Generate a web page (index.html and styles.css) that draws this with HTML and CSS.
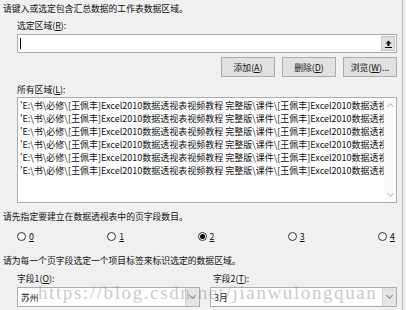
FILE: index.html
```html
<!DOCTYPE html>
<html lang="zh-CN">
<head>
  <meta charset="UTF-8">
  <meta name="viewport" content="width=device-width, initial-scale=1.0">
  <title>数据透视表和数据透视图向导</title>
  <link rel="stylesheet" href="styles.css">
</head>
<body>
  <div class="dialog">
    <p class="prompt">请键入或选定包含汇总数据的工作表数据区域。</p>

    <div class="group">
      <div class="field-label">选定区域(<u>R</u>):</div>
      <div class="ref-input">
        <span class="caret"></span>
        <button class="collapse" title="折叠对话框">
          <svg width="7" height="8" viewBox="0 0 7 8">
            <path d="M3.5 0.5 L6.5 3.5 H4.5 V6 H2.5 V3.5 H0.5 Z" fill="#000"/>
            <rect x="0" y="7" width="7" height="1" fill="#000"/>
          </svg>
        </button>
      </div>

      <div class="actions">
        <button class="btn">添加(<u>A</u>)</button>
        <button class="btn">删除(<u>D</u>)</button>
        <button class="btn">浏览(<u>W</u>)...</button>
      </div>

      <div class="field-label list-label">所有区域(<u>L</u>):</div>
      <div class="listbox">
        <ul class="ranges">
          <li>'E:\书\必修\[王佩丰]Excel2010数据透视表视频教程 完整版\课件\[王佩丰]Excel2010数据透视表视频教程</li>
          <li>'E:\书\必修\[王佩丰]Excel2010数据透视表视频教程 完整版\课件\[王佩丰]Excel2010数据透视表视频教程</li>
          <li>'E:\书\必修\[王佩丰]Excel2010数据透视表视频教程 完整版\课件\[王佩丰]Excel2010数据透视表视频教程</li>
          <li>'E:\书\必修\[王佩丰]Excel2010数据透视表视频教程 完整版\课件\[王佩丰]Excel2010数据透视表视频教程</li>
          <li>'E:\书\必修\[王佩丰]Excel2010数据透视表视频教程 完整版\课件\[王佩丰]Excel2010数据透视表视频教程</li>
          <li>'E:\书\必修\[王佩丰]Excel2010数据透视表视频教程 完整版\课件\[王佩丰]Excel2010数据透视表视频教程</li>
        </ul>
        <div class="scrollbar">
          <span class="arrow up"></span>
          <span class="arrow down"></span>
        </div>
      </div>
    </div>

    <p class="prompt">请先指定要建立在数据透视表中的页字段数目。</p>
    <div class="radios">
      <label class="radio"><span class="dot"></span><u>0</u></label>
      <label class="radio"><span class="dot"></span><u>1</u></label>
      <label class="radio"><span class="dot checked"></span><u>2</u></label>
      <label class="radio"><span class="dot"></span><u>3</u></label>
      <label class="radio"><span class="dot"></span><u>4</u></label>
    </div>

    <p class="prompt">请为每一个页字段选定一个项目标签来标识选定的数据区域。</p>
    <div class="fields">
      <div class="field">
        <div class="field-label">字段1(<u>O</u>):</div>
        <div class="combo">
          <span class="combo-value">苏州</span>
          <span class="combo-btn"></span>
        </div>
      </div>
      <div class="field second">
        <div class="field-label">字段2(<u>T</u>):</div>
        <div class="combo">
          <span class="combo-value">3月</span>
          <span class="combo-btn"></span>
        </div>
      </div>
    </div>

    <div class="watermark">https://blog.csdn.net/jianwulongquan</div>
  </div>
</body>
</html>
```

FILE: styles.css
```css
* {
  margin: 0;
  padding: 0;
  box-sizing: border-box;
}

body {
  font-family: "Noto Sans CJK SC", "Noto Sans", sans-serif;
  font-size: 8.8px;
  line-height: 13px;
  color: #111;
  background-color: #f0f0f0;
  width: 406px;
  height: 310px;
  overflow: hidden;
}

.dialog {
  position: relative;
  width: 403px;
  height: 310px;
  padding: 2px 0 0 3px;
  border-right: 1px solid #b9b9b9;
}

u {
  text-decoration: underline;
  text-underline-offset: 1px;
}

.prompt {
  height: 13px;
  white-space: nowrap;
}

.group {
  padding-left: 14px;
  width: 394px;
}

.field-label {
  height: 13px;
  margin-top: 4px;
}

.ref-input {
  display: flex;
  align-items: center;
  justify-content: space-between;
  height: 19px;
  margin-top: 2px;
  padding: 0 1px 0 2px;
  background: #fff;
  border: 1px solid #abadb3;
}

.caret {
  width: 1px;
  height: 11px;
  background: #000;
}

.collapse {
  display: flex;
  align-items: center;
  justify-content: center;
  width: 14px;
  height: 15px;
  background: #e1e1e1;
  border: 1px solid #c4c4c4;
}

.actions {
  display: flex;
  justify-content: flex-end;
  gap: 7px;
  margin-top: 4px;
}

.btn {
  width: 54px;
  height: 20px;
  font-family: inherit;
  font-size: 8.8px;
  color: #111;
  background: #e1e1e1;
  border: 1px solid #adadad;
}

.list-label {
  margin-top: 6px;
}

.listbox {
  display: flex;
  height: 106px;
  margin-top: 1px;
  background: #fff;
  border: 1px solid #abadb3;
}

.ranges {
  flex: 1;
  list-style: none;
  overflow: hidden;
  padding: 1px 0 0 2px;
}

.ranges li {
  height: 13px;
  font-size: 9px;
  white-space: nowrap;
  overflow: hidden;
}

.scrollbar {
  display: flex;
  flex-direction: column;
  justify-content: space-between;
  align-items: center;
  width: 12px;
  padding: 4px 0;
  background: #fafafa;
}

.arrow {
  width: 5px;
  height: 5px;
  border-left: 1px solid #c2c2c2;
  border-top: 1px solid #c2c2c2;
}

.arrow.up {
  transform: translateY(2px) rotate(45deg);
}

.arrow.down {
  transform: translateY(-2px) rotate(225deg);
}

.group + .prompt {
  margin-top: 7px;
}

.radios {
  display: flex;
  justify-content: space-between;
  width: 394px;
  height: 13px;
  margin-top: 7px;
  padding-left: 14px;
}

.radio {
  display: flex;
  align-items: center;
  gap: 3px;
  width: 19px;
}

.dot {
  display: flex;
  align-items: center;
  justify-content: center;
  width: 9px;
  height: 9px;
  border: 1px solid #333;
  border-radius: 50%;
  background: #fff;
}

.dot.checked::after {
  content: "";
  width: 5px;
  height: 5px;
  border-radius: 50%;
  background: #000;
}

.radios + .prompt {
  margin-top: 11px;
}

.fields {
  display: grid;
  grid-template-columns: 183px 187px;
  gap: 10px;
  padding-left: 14px;
  margin-top: 1px;
}

.field.second .field-label {
  padding-left: 3px;
}

.combo {
  display: flex;
  justify-content: space-between;
  align-items: center;
  height: 20px;
  margin-top: 2px;
  padding-left: 3px;
  background: #fff;
  border: 1px solid #abadb3;
}

.combo-btn {
  position: relative;
  width: 14px;
  height: 18px;
  background: #e5e5e5;
  border-left: 1px solid #d4d4d4;
}

.combo-btn::after {
  content: "";
  position: absolute;
  left: 4px;
  top: 5px;
  width: 4px;
  height: 4px;
  border-right: 1px solid #888;
  border-bottom: 1px solid #888;
  transform: rotate(45deg);
}

.watermark {
  position: absolute;
  left: 38px;
  top: 283px;
  font-family: "Liberation Serif", serif;
  font-size: 19px;
  line-height: 20px;
  letter-spacing: 1.6px;
  color: rgba(150, 150, 150, 0.5);
  white-space: nowrap;
  pointer-events: none;
}
```
